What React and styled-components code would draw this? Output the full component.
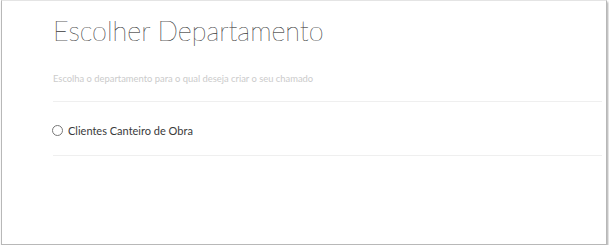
import styled, { createGlobalStyle } from "styled-components";

const Global = createGlobalStyle`
  html, body {
    margin: 0;
    padding: 0;
    background: #ffffff;
  }
  * {
    box-sizing: border-box;
  }
`;

const Frame = styled.div`
  margin: 0 0 0 1px;
  width: 606px;
  height: 245px;
  background: #ffffff;
  border: 1px solid #b8b8b8;
  border-top-color: #e4e4e4;
  box-shadow: 1px 2px 2px rgba(0, 0, 0, 0.35);
  padding: 0 4px 0 50px;
  font-family: Lato, "Liberation Sans", sans-serif;
`;

const Title = styled.h1`
  margin: 0 0 0 1px;
  padding-top: 12px;
  font-size: 27px;
  line-height: 36px;
  font-weight: 100;
  color: #222222;
  -webkit-text-stroke: 0.2px #444444;
`;

const Subtitle = styled.p`
  margin: 0 0 0 1px;
  padding: 22px 0 14px;
  font-size: 9.4px;
  line-height: 16px;
  color: #cbcbcb;
`;

const Option = styled.label`
  display: flex;
  align-items: center;
  gap: 5px;
  height: 55px;
  padding-top: 3px;
  margin-left: 1px;
  border-top: 1px solid #efefef;
  border-bottom: 1px solid #efefef;
  font-size: 11px;
  color: #3a3a3a;
`;

const Radio = styled.span`
  width: 11px;
  height: 11px;
  margin-left: -1px;
  border-radius: 50%;
  border: 1px solid #777777;
  background: #ffffff;
  flex-shrink: 0;
`;

export default function App() {
  return (
    <>
      <Global />
      <Frame>
        <Title>Escolher Departamento</Title>
        <Subtitle>Escolha o departamento para o qual deseja criar o seu chamado</Subtitle>
        <Option>
          <Radio />
          Clientes Canteiro de Obra
        </Option>
      </Frame>
    </>
  );
}
